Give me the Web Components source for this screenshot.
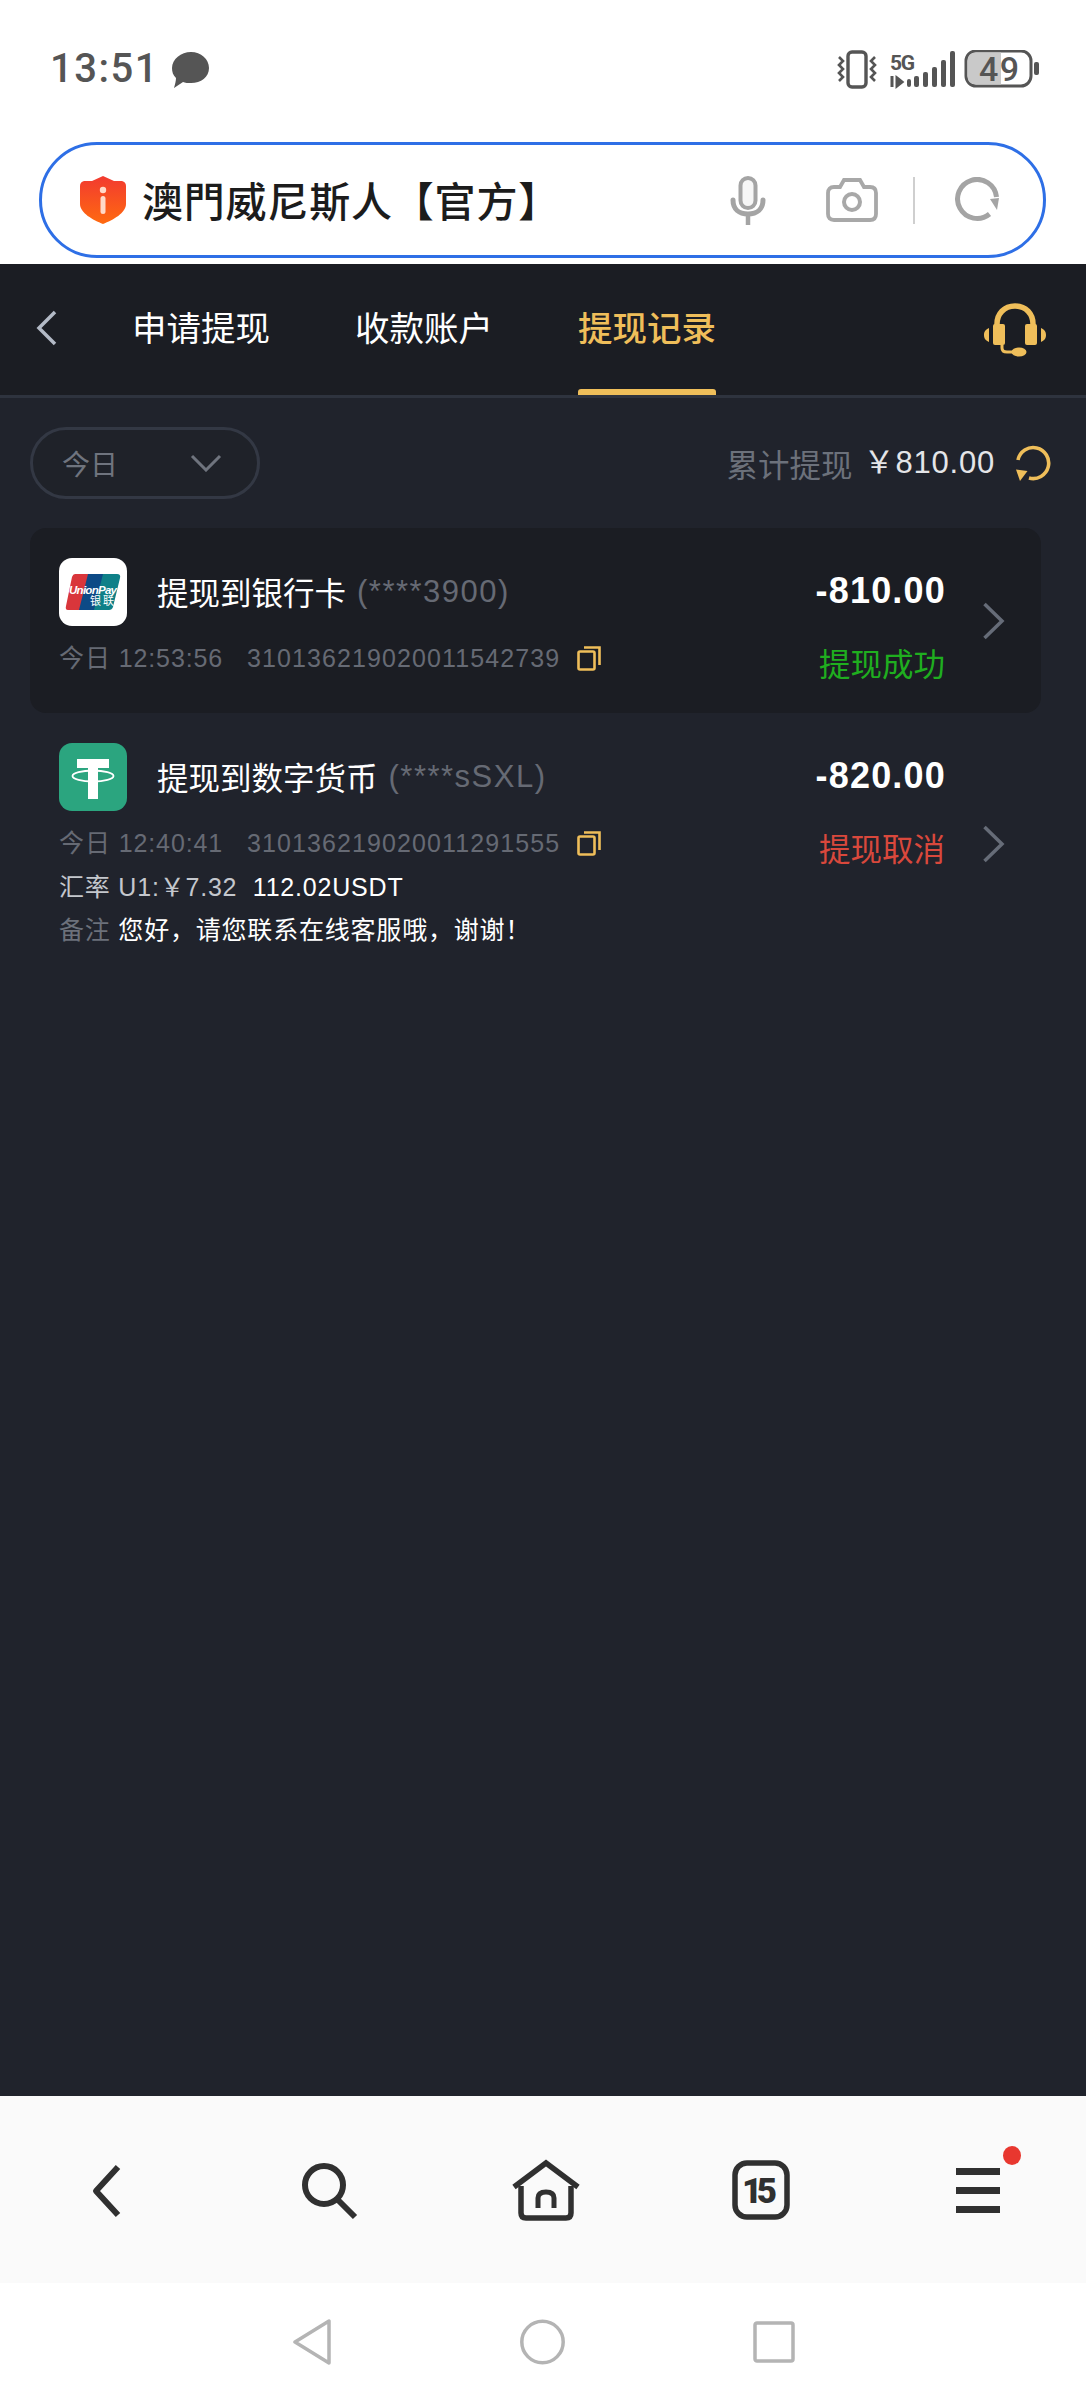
<!DOCTYPE html>
<html lang="zh">
<head>
<meta charset="utf-8">
<title>提现记录</title>
<style>
  html, body { margin: 0; padding: 0; background: #fff; }
  body {
    width: 1086px;
    height: 2400px;
    display: flex;
    flex-direction: column;
    overflow: hidden;
    font-family: "Liberation Sans", "Noto Sans CJK SC", sans-serif;
  }
  wallet-page { flex: 1; }
</style>
</head>
<body>
<phone-status></phone-status>
<url-bar>澳門威尼斯人【官方】</url-bar>
<wallet-page>
  <wallet-tabs></wallet-tabs>
  <record-filter></record-filter>
  <withdraw-record highlight type="bank" title="提现到银行卡" account="(****3900)" amount="-810.00"
    time="今日 12:53:56" order="310136219020011542739" status="提现成功" tone="ok"></withdraw-record>
  <withdraw-record type="usdt" title="提现到数字货币" account="(****sSXL)" amount="-820.00"
    time="今日 12:40:41" order="310136219020011291555" status="提现取消" tone="bad">
    <div slot="extra"><span style="color:#c4c7cd">汇率 U1:￥7.32</span>&nbsp; 112.02USDT</div>
    <div slot="extra"><span style="color:#6c717b">备注</span> 您好，请您联系在线客服哦，谢谢！</div>
  </withdraw-record>
</wallet-page>
<browser-toolbar></browser-toolbar>
<system-nav></system-nav>

<script>
class PhoneStatus extends HTMLElement {
    constructor() {
        super();
        this.attachShadow({ mode: 'open' });
        this.shadowRoot.innerHTML = `
            <style>
                :host { display: block; height: 132px; background: #fff; }
                .bar { display: flex; align-items: flex-start; padding: 50px 47px 0 50px; color: #555; }
                .time { font: 500 40px/38px Roboto, sans-serif; letter-spacing: 1.500px; width: 122px; }
                .msg { margin-top: 2px; }
                .right { margin-left: auto; display: flex; align-items: flex-start; }
                svg { display: block; }
            </style>
            <div class="bar">
                <span class="time">13:51</span>
                <svg class="msg" width="38" height="37" viewBox="0 0 38 37">
                    <path d="M19 0C29 0 37 7 37 16S29 31 19 31C16 31 13 31 11 30L2 36C3 32 4 29 4 26 1 23 0 20 0 16 0 7 9 0 19 0Z" fill="#555"/>
                </svg>
                <div class="right">
                    <svg width="203" height="40" viewBox="0 0 203 40">
                        <rect x="12" y="2" width="18" height="35" rx="4" fill="none" stroke="#555" stroke-width="3.400"/>
                        <path d="M3 7l4 4-4 4 4 4-4 4 4 4-4 4M39 7l-4 4 4 4-4 4 4 4-4 4 4 4" fill="none" stroke="#555" stroke-width="2.600"/>
                        <text x="54" y="20" font-family="Roboto" font-weight="700" font-size="21" fill="#555" textLength="25">5G</text>
                        <path d="M56 26v11M61 28l5 4-5 4z" stroke="#555" stroke-width="3" fill="#555"/>
                        <rect x="71" y="29" width="4" height="8" rx="2" fill="#555"/>
                        <rect x="78" y="26" width="5" height="11" rx="2" fill="#555"/>
                        <rect x="87" y="22" width="5" height="15" rx="2" fill="#555"/>
                        <rect x="96" y="17" width="5" height="20" rx="2" fill="#555"/>
                        <rect x="105" y="10" width="5" height="27" rx="2" fill="#555"/>
                        <rect x="114" y="1" width="5" height="36" rx="2" fill="#555"/>
                        <rect x="130" y="1" width="65" height="35" rx="10" fill="#fff" stroke="#555" stroke-width="3"/>
                        <path d="M140 2.500H165V34.500H140Q131.500 34.500 131.500 26V11Q131.500 2.500 140 2.500Z" fill="#c9c9c9"/>
                        <text x="143" y="31" font-family="Roboto" font-weight="500" font-size="34" fill="#555" textLength="40">49</text>
                        <rect x="198" y="12" width="5" height="13" rx="2" fill="#555"/>
                    </svg>
                </div>
            </div>
        `;
    }
}

class UrlBar extends HTMLElement {
    constructor() {
        super();
        this.attachShadow({ mode: 'open' });
        this.shadowRoot.innerHTML = `
            <style>
                :host { display: block; height: 132px; padding: 10px 40px 0 39px; box-sizing: border-box; background: #fff; }
                .pill {
                    height: 116px; box-sizing: border-box;
                    border: 3.500px solid #2e6fe6; border-radius: 58px;
                    display: flex; align-items: center; padding: 0 42px 0 38px;
                }
                .label {
                    margin: 0 0 3px 16px; flex: 1; color: #1c1c1c;
                    font: 500 41px/50px "Noto Sans CJK TC", sans-serif; letter-spacing: 0.800px; white-space: nowrap;
                }
                svg { display: block; flex: none; }
                .sep { width: 2.500px; height: 47px; background: #cfcfcf; margin: 0 40px 0 35px; }
                .cam { margin: 0 0 0 60px; }
            </style>
            <div class="pill">
                <svg width="46" height="48" viewBox="0 0 46 48">
                    <defs><linearGradient id="sh" x1="0" y1="0" x2="0" y2="1"><stop offset="0" stop-color="#f23a30"/><stop offset="1" stop-color="#ff6a10"/></linearGradient></defs>
                    <path d="M23 0L34 5 42 5Q46 6 46 10V28C46 37 33 44 23 48 13 44 0 37 0 28V10Q0 6 4 5L12 5Z" fill="url(#sh)"/>
                    <circle cx="23" cy="14" r="3.200" fill="#ffd9c8"/>
                    <rect x="20.500" y="20" width="5" height="18" rx="2.500" fill="#ffd9c8"/>
                </svg>
                <span class="label"><slot></slot></span>
                <svg width="36" height="49" viewBox="0 0 36 49">
                    <rect x="10.500" y="2" width="15" height="30" rx="7.500" fill="#f6f6f6" stroke="#a4a4a4" stroke-width="4"/>
                    <path d="M3 24C3 33 9 38 18 38S33 33 33 24" fill="none" stroke="#a4a4a4" stroke-width="5" stroke-linecap="round"/>
                    <path d="M18 38V49" stroke="#a4a4a4" stroke-width="4.500"/>
                </svg>
                <svg class="cam" width="52" height="44" viewBox="0 0 52 44">
                    <path d="M8 9H14L18 2H34L38 9H44Q50 9 50 15V36Q50 42 44 42H8Q2 42 2 36V15Q2 9 8 9Z" fill="none" stroke="#a8a8a8" stroke-width="3.800"/>
                    <circle cx="26" cy="24" r="8" fill="none" stroke="#a8a8a8" stroke-width="4"/>
                </svg>
                <div class="sep"></div>
                <svg width="46" height="46" viewBox="0 0 46 46">
                    <path d="M34.500 37A19.500 19.500 0 1 1 41.500 20" fill="none" stroke="#a4a4a4" stroke-width="5"/>
                    <path d="M35 22L44 21 42 33Z" fill="#a4a4a4"/>
                </svg>
            </div>
        `;
    }
}

class WalletPage extends HTMLElement {
    constructor() {
        super();
        this.attachShadow({ mode: 'open' });
        this.shadowRoot.innerHTML = `
            <style>
                :host { display: block; background: #20232c; color: #fff; font-family: "Liberation Sans", "Noto Sans CJK SC", sans-serif; }
            </style>
            <slot></slot>
        `;
    }
}

class WalletTabs extends HTMLElement {
    constructor() {
        super();
        this.attachShadow({ mode: 'open' });
        this.shadowRoot.innerHTML = `
            <style>
                :host { display: block; height: 134px; box-sizing: border-box; background: #1b1d23; border-bottom: 3px solid #2e333e; }
                .row { height: 131px; display: flex; align-items: stretch; padding: 0 40px 0 36px; }
                .back { align-self: center; margin: 0 75px 4px 0; flex: none; }
                .tab {
                    font: 400 34.500px/124px "Noto Sans CJK SC", sans-serif; color: #fff;
                    margin-right: 85px; white-space: nowrap; position: relative;
                }
                .tab.on { color: #efbe5a; font-weight: 500; }
                .tab.on::after {
                    content: ""; position: absolute; left: 0; right: 0; bottom: 0; height: 6px;
                    background: #efbe5a; border-radius: 3px 3px 0 0;
                }
                .help { margin-left: auto; align-self: flex-start; margin-top: 39px; display: block; }
            </style>
            <div class="row">
                <svg class="back" width="21" height="36" viewBox="0 0 21 36"><path d="M19 2L3 18 19 34" fill="none" stroke="#b3bac6" stroke-width="3.500"/></svg>
                <div class="tab">申请提现</div>
                <div class="tab">收款账户</div>
                <div class="tab on">提现记录</div>
                <svg class="help" width="62" height="54" viewBox="0 0 62 54">
                    <path d="M13 26V21C13 11 20 3 31 3S49 11 49 21V26" fill="none" stroke="#efbe5a" stroke-width="5.500"/>
                    <rect x="9" y="21" width="12" height="21" rx="2" fill="#efbe5a"/>
                    <rect x="41" y="21" width="12" height="21" rx="2" fill="#efbe5a"/>
                    <path d="M5 25V39C1 37 0 35 0 32S1 27 5 25ZM57 25V39C61 37 62 35 62 32S61 27 57 25Z" fill="#efbe5a"/>
                    <path d="M18 42V45Q18 49 23 49H30" fill="none" stroke="#efbe5a" stroke-width="3"/>
                    <ellipse cx="35" cy="49" rx="7.500" ry="4.500" fill="#efbe5a"/>
                </svg>
            </div>
        `;
    }
}

class RecordFilter extends HTMLElement {
    constructor() {
        super();
        this.attachShadow({ mode: 'open' });
        this.shadowRoot.innerHTML = `
            <style>
                :host { display: block; padding: 29px 35px 29px 30px; }
                .row { display: flex; align-items: center; height: 72px; }
                .pill {
                    width: 230px; height: 72px; box-sizing: border-box; border: 3px solid #333844; border-radius: 36px;
                    display: flex; align-items: center; justify-content: space-between; padding: 0 35px 0 29px;
                    color: #6f747e; font: 400 28px/36px "Noto Sans CJK SC", sans-serif; background: #1f2229;
                }
                .sum { margin-left: auto; display: flex; align-items: center; font-size: 31.500px; color: #6c717b; }
                .sum b { font: 400 31px/40px "Liberation Sans", "Noto Sans CJK SC", sans-serif; color: #e4e5e8; margin: 0 21px 0 11px; letter-spacing: 0.800px; }
                .sum span { font-family: "Noto Sans CJK SC", sans-serif; }
                svg { display: block; }
            </style>
            <div class="row">
                <div class="pill">今日
                    <svg width="32" height="18" viewBox="0 0 32 18"><path d="M2 2L16 16 30 2" fill="none" stroke="#6f747e" stroke-width="3"/></svg>
                </div>
                <div class="sum">
                    <span>累计提现</span><b>￥810.00</b>
                    <svg width="35" height="37" viewBox="0 0 35 37">
                        <path d="M2 15A15.500 15.500 0 1 1 13 33" fill="none" stroke="#efbe5a" stroke-width="3.600"/>
                        <path d="M0 24.500L11.500 26 4 36Z" fill="#efbe5a"/>
                    </svg>
                </div>
            </div>
        `;
    }
}

const recordIcons = {
    bank: `
        <svg width="68" height="68" viewBox="0 0 68 68">
            <rect width="68" height="68" rx="13" fill="#fff"/>
            <path d="M16 16H33L24 52H9Q6 52 7 48L13 19Q14 16 16 16Z" fill="#d9363b"/>
            <path d="M29 16H49L40 52H20Z" fill="#0d4a86"/>
            <path d="M44 16H58Q62 16 61 20L54 49Q53 52 50 52H35Z" fill="#0f8088"/>
            <text x="10" y="36" font-family="Liberation Sans" font-weight="700" font-style="italic" font-size="11.500" fill="#fff" textLength="48">UnionPay</text>
            <text x="31" y="47" font-family="Noto Sans CJK SC" font-size="11" fill="#fff" textLength="24">银联</text>
        </svg>`,
    usdt: `
        <svg width="68" height="68" viewBox="0 0 68 68">
            <rect width="68" height="68" rx="13" fill="#2ba57f"/>
            <path d="M18 16H50V25H39V56H29V25H18Z" fill="#fff"/>
            <ellipse cx="34" cy="33" rx="20.500" ry="5.500" fill="none" stroke="#fff" stroke-width="1.800"/>
        </svg>`
};

class WithdrawRecord extends HTMLElement {
    connectedCallback() {
        if (this.shadowRoot) return;
        this.attachShadow({ mode: 'open' });
        const a = (n) => this.getAttribute(n);
        this.shadowRoot.innerHTML = `
            <style>
                :host { display: block; padding: 0 45px 0 30px; }
                .box {
                    display: flex; align-items: flex-start; padding: 0 36px 0 29px; min-height: 185px;
                    border-radius: 16px; box-sizing: border-box;
                }
                :host([highlight]) .box { background: #1b1d23; }
                .main {
                    flex: 1; padding: 30px 0 27px; min-width: 0; color: #fff;
                    font: 400 25px/36px "Liberation Sans", "Noto Sans CJK SC", sans-serif;
                }
                .head { display: flex; align-items: center; height: 68px; }
                .head svg { display: block; flex: none; margin-right: 30px; }
                .title { font: 400 31.500px/44px "Noto Sans CJK SC", sans-serif; color: #fff; padding-bottom: 2px; }
                .account { font: 400 31px/44px "Liberation Sans", sans-serif; color: #666a74; margin-left: 11px; letter-spacing: 1.500px; }
                .meta { display: flex; align-items: center; height: 36px; margin-top: 14px; color: #666a74; white-space: nowrap; }
                .meta .time { width: 188px; letter-spacing: 0.900px; }
                .meta .order { letter-spacing: 1.100px; }
                .meta svg { margin-left: 17px; display: block; }
                ::slotted([slot="extra"]) { margin-top: 7.500px; height: 36px; white-space: nowrap; letter-spacing: 0.800px; }
                .side { text-align: right; padding-top: 40px; margin-right: 37px; }
                .amount { font: 700 36px/46px "Liberation Sans", sans-serif; color: #fff; letter-spacing: 1.200px; margin-right: -1px; }
                .status { font: 400 31.500px/44px "Noto Sans CJK SC", sans-serif; margin-top: 26px; }
                :host([tone="ok"]) .status { color: #1fae1f; }
                :host([tone="bad"]) .status { color: #d9483c; }
                .go { flex: none; display: block; align-self: center; }
            </style>
            <div class="box">
                <div class="main">
                    <div class="head">
                        ${recordIcons[a('type')]}
                        <span class="title">${a('title')}</span>
                        <span class="account">${a('account')}</span>
                    </div>
                    <div class="meta">
                        <span class="time">${a('time')}</span>
                        <span class="order">${a('order')}</span>
                        <svg width="24" height="25" viewBox="0 0 24 25">
                            <rect x="1.500" y="5.500" width="16" height="18" rx="1.500" fill="none" stroke="#efbe5a" stroke-width="2.600"/>
                            <path d="M7 1.500H22.500V19" fill="none" stroke="#efbe5a" stroke-width="2.600"/>
                        </svg>
                    </div>
                    <slot name="extra"></slot>
                </div>
                <div class="side">
                    <div class="amount">${a('amount')}</div>
                    <div class="status">${a('status')}</div>
                </div>
                <svg class="go" width="23" height="38" viewBox="0 0 23 38"><path d="M2.500 2L20 19 2.500 36" fill="none" stroke="#666c78" stroke-width="3.500"/></svg>
            </div>
        `;
    }
}

class BrowserToolbar extends HTMLElement {
    constructor() {
        super();
        this.attachShadow({ mode: 'open' });
        this.shadowRoot.innerHTML = `
            <style>
                :host { display: block; height: 187px; background: #fafafa; }
                .row { display: grid; grid-template-columns: 208px 212px 220px 224px auto; padding-left: 92px; padding-top: 50px; }
                svg { display: block; overflow: visible; }
                .menu { position: relative; width: 65px; }
                .dot { position: absolute; left: 47px; top: 0; width: 18px; height: 19px; border-radius: 50%; background: #e8372f; }
            </style>
            <div class="row">
                <svg width="28" height="54" viewBox="0 0 28 54" style="margin-top:18px"><path d="M26 3L4 27 26 51" fill="none" stroke="#303030" stroke-width="6" stroke-linejoin="round"/></svg>
                <svg width="58" height="58" viewBox="0 0 58 58" style="margin-top:16px">
                    <circle cx="24" cy="23" r="19" fill="none" stroke="#303030" stroke-width="6"/>
                    <path d="M37 37L55 55" stroke="#303030" stroke-width="6"/>
                </svg>
                <svg width="68" height="62" viewBox="0 0 68 62" style="margin-top:14px">
                    <path d="M2 27L34 3 66 27" fill="none" stroke="#303030" stroke-width="5.500"/>
                    <path d="M9 26V53Q9 58 14 58H54Q59 58 59 53V26" fill="none" stroke="#303030" stroke-width="5.500"/>
                    <path d="M26 48V38Q26 32 34 32T42 38V48" fill="none" stroke="#303030" stroke-width="5"/>
                </svg>
                <svg width="58" height="60" viewBox="0 0 58 60" style="margin-top:14px">
                    <rect x="3" y="3" width="52" height="54" rx="12" fill="none" stroke="#303030" stroke-width="5.500"/>
                    <text x="10" y="43" font-family="Roboto" font-weight="900" font-size="35" fill="#303030" textLength="35">15</text>
                </svg>
                <div class="menu">
                    <svg width="44" height="46" viewBox="0 0 44 46" style="margin-top:22px">
                        <rect y="0" width="44" height="7" fill="#303030"/>
                        <rect y="19" width="44" height="7" fill="#303030"/>
                        <rect y="38" width="44" height="7" fill="#303030"/>
                    </svg>
                    <div class="dot"></div>
                </div>
            </div>
        `;
    }
}

class SystemNav extends HTMLElement {
    constructor() {
        super();
        this.attachShadow({ mode: 'open' });
        this.shadowRoot.innerHTML = `
            <style>
                :host { display: block; height: 117px; background: #fff; }
                .row { display: flex; align-items: flex-start; padding: 36px 0 0 293px; }
                svg { display: block; }
            </style>
            <div class="row">
                <svg width="38" height="46" viewBox="0 0 38 46" style="margin-right:189px">
                    <path d="M36 2V44L2 23Z" fill="none" stroke="#b4b4b4" stroke-width="3.500" stroke-linejoin="round"/>
                </svg>
                <svg width="45" height="46" viewBox="0 0 45 46" style="margin-right:188px">
                    <circle cx="22.500" cy="23" r="20.700" fill="none" stroke="#b4b4b4" stroke-width="3.500"/>
                </svg>
                <svg width="42" height="42" viewBox="0 0 42 42" style="margin-top:2px">
                    <rect x="2" y="2" width="38" height="38" rx="2" fill="none" stroke="#b4b4b4" stroke-width="3.500"/>
                </svg>
            </div>
        `;
    }
}

customElements.define('phone-status', PhoneStatus);
customElements.define('url-bar', UrlBar);
customElements.define('wallet-page', WalletPage);
customElements.define('wallet-tabs', WalletTabs);
customElements.define('record-filter', RecordFilter);
customElements.define('withdraw-record', WithdrawRecord);
customElements.define('browser-toolbar', BrowserToolbar);
customElements.define('system-nav', SystemNav);
</script>
</body>
</html>
